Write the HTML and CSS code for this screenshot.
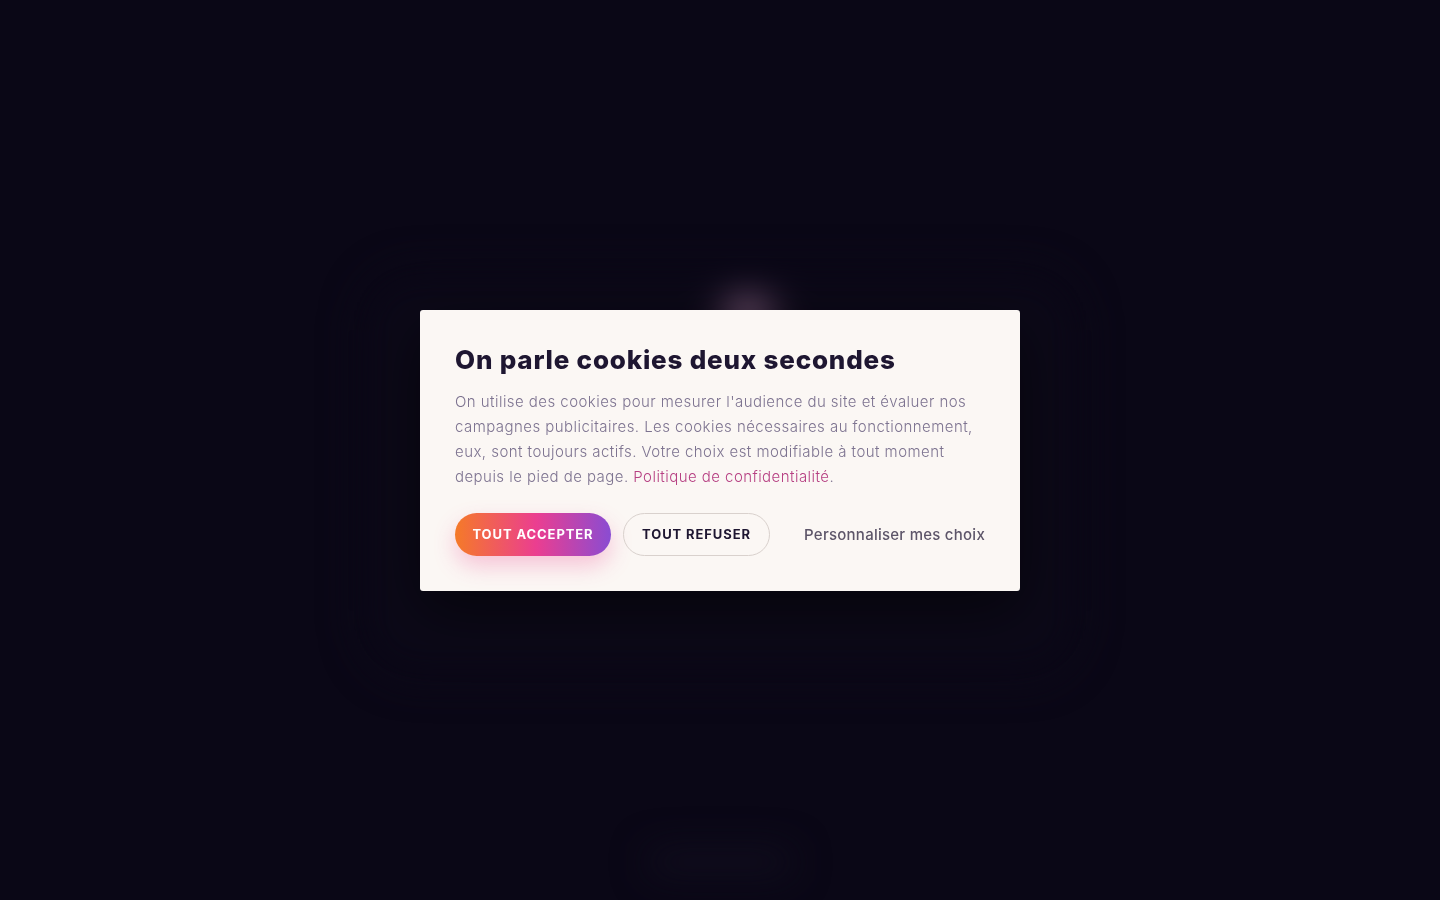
FILE: index.html
```html
<!DOCTYPE html>
<html lang="fr">
<head>
<meta charset="utf-8">
<title>Cookies</title>
<link rel="stylesheet" href="styles.css">
</head>
<body>
<div class="backdrop" aria-hidden="true">
  <div class="ghost-card"><span class="ghost-glow"></span></div>
  <div class="ghost-pill"></div>
</div>
<div class="overlay">
  <section class="modal" role="dialog" aria-labelledby="cookie-title">
    <h2 id="cookie-title" class="modal-title">On parle cookies deux secondes</h2>
    <p class="modal-text">On utilise des cookies pour mesurer l'audience du site et évaluer nos campagnes publicitaires. Les cookies nécessaires au fonctionnement, eux, sont toujours actifs. Votre choix est modifiable à tout moment depuis le pied de page. <a class="modal-link" href="#">Politique de confidentialité</a>.</p>
    <div class="modal-actions">
      <button class="btn btn-accept" type="button">Tout accepter</button>
      <button class="btn btn-refuse" type="button">Tout refuser</button>
      <button class="btn-link" type="button">Personnaliser mes choix</button>
    </div>
  </section>
</div>
</body>
</html>
```

FILE: styles.css
```css
* { box-sizing: border-box; }

html, body {
  margin: 0;
  height: 100%;
}

body {
  background: #0a0716;
  font-family: Inter, "Noto Sans", sans-serif;
  overflow: hidden;
}

.backdrop {
  position: fixed;
  inset: 0;
  display: flex;
  flex-direction: column;
  align-items: center;
  filter: blur(18px);
}

.ghost-card {
  position: relative;
  margin-top: 268px;
  width: 724px;
  height: 412px;
  border-radius: 60px;
  background: #0c0918;
}

.ghost-glow {
  position: absolute;
  left: 352px;
  top: 22px;
  width: 76px;
  height: 50px;
  border-radius: 50%;
  background: radial-gradient(closest-side, #d8ccd0 0%, #6a4468 40%, rgba(40, 14, 50, 0) 100%);
}

.ghost-pill {
  margin-top: 170px;
  width: 145px;
  height: 24px;
  border-radius: 12px;
  background: #110e1e;
}

.overlay {
  position: fixed;
  inset: 0;
  display: flex;
  align-items: center;
  justify-content: center;
}

.modal {
  width: 600px;
  background: #fbf7f4;
  border-radius: 3px;
  padding: 32px 35px 35px;
  box-shadow: 0 20px 60px rgba(0, 0, 0, 0.5);
}

.modal-title {
  margin: 0;
  font-size: 26px;
  line-height: 36px;
  font-weight: 800;
  color: #1e1631;
  letter-spacing: 0.8px;
}

.modal-text {
  margin: 11px 0 0;
  font-size: 15px;
  line-height: 25px;
  font-weight: 300;
  letter-spacing: 0.45px;
  color: #7d7390;
}

.modal-link {
  color: #b63f82;
  text-decoration: none;
}

.modal-actions {
  margin-top: 24px;
  display: flex;
  align-items: center;
  gap: 12px;
}

.btn {
  height: 43px;
  border-radius: 22px;
  font-family: inherit;
  font-size: 13px;
  font-weight: 700;
  letter-spacing: 0.9px;
  text-transform: uppercase;
  cursor: pointer;
}

.btn-accept {
  width: 156px;
  border: 0;
  color: #fff;
  background: linear-gradient(90deg, #f57a28 0%, #eb3e90 52%, #8a4cd2 100%);
  box-shadow: 0 10px 22px rgba(236, 64, 140, 0.28);
}

.btn-refuse {
  width: 147px;
  border: 1px solid #d9d1cd;
  background: transparent;
  color: #1e1631;
}

.btn-link {
  margin-left: auto;
  border: 0;
  background: none;
  padding: 0;
  font-family: inherit;
  font-size: 15px;
  font-weight: 550;
  letter-spacing: 0.25px;
  color: #5d5569;
  cursor: pointer;
}
```
